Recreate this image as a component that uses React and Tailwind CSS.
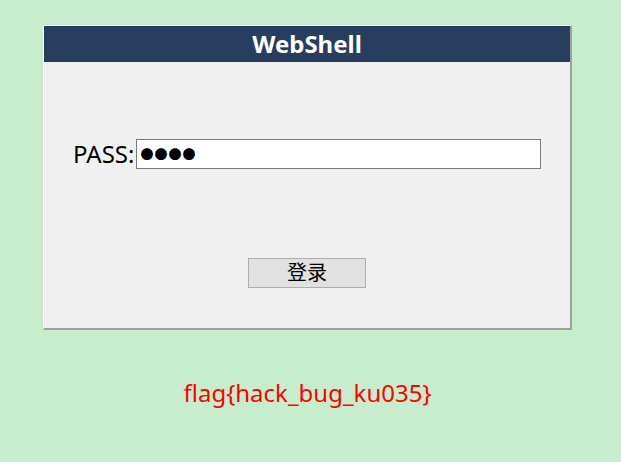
export default function App() {
  return (
    <div className="min-h-[462px] w-full bg-[#c7edcc] pt-[25px] font-['Noto_Sans','Noto_Sans_CJK_SC',sans-serif]">
      <div className="ml-[43px] w-[529px]">
        {/* Panel */}
        <div className="flex h-[305px] flex-col border-t border-l border-t-white border-l-white border-r-2 border-b-2 border-r-[#a0a0a0] border-b-[#a0a0a0] bg-[#f0f0f0]">
          <div className="flex h-[36px] items-center justify-center bg-[#283e5f]">
            <h1 className="text-[24px] font-bold leading-none text-white">WebShell</h1>
          </div>
          <div className="flex items-center pl-[29px] pt-[77px]">
            <label className="mr-[2px] text-[24px] leading-none text-black">PASS:</label>
            <div className="flex h-[30px] w-[405px] items-center border border-[#7a7a7a] bg-white pl-[3px]">
              <span className="text-[13px] leading-none tracking-[1px] text-black">●●●●</span>
            </div>
          </div>
          <div className="flex justify-center pt-[89px]">
            <button className="flex h-[30px] w-[118px] items-center justify-center border border-[#adadad] bg-[#e1e1e1] text-[20px] leading-none text-black">
              登录
            </button>
          </div>
        </div>
        <p className="mt-[51px] text-center text-[24px] leading-none text-[#ff0000]">flag{'{'}hack_bug_ku035{'}'}</p>
      </div>
    </div>
  );
}
